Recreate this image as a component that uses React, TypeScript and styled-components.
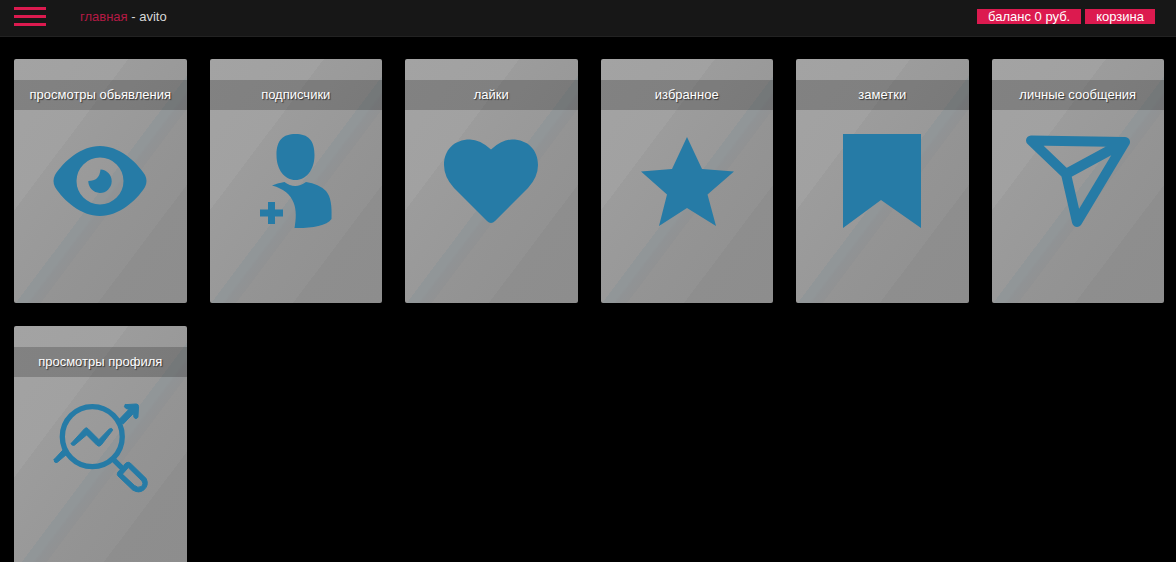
import React from "react";
import styled, { createGlobalStyle } from "styled-components";

const GlobalStyle = createGlobalStyle`
  * { box-sizing: border-box; }
  body {
    margin: 0;
    background: #000;
    color: #fff;
    font: 13px/16px "Liberation Sans", Arial, sans-serif;
  }
`;

const Header = styled.header`
  display: flex;
  align-items: flex-start;
  height: 37px;
  padding: 7px 21px 0 14px;
  background: #171717;
  border-bottom: 1px solid #222;
`;

const MenuButton = styled.button`
  display: flex;
  flex-direction: column;
  gap: 5px;
  width: 32px;
  margin: 0;
  padding: 0;
  border: 0;
  background: none;
  cursor: pointer;
`;

const MenuBar = styled.span`
  height: 3px;
  background: #dc1a4f;
`;

const Breadcrumbs = styled.nav`
  margin: 2px auto 0 34px;
  color: #d8d8d8;
`;

const HomeLink = styled.a`
  color: #b51a45;
  text-decoration: none;
`;

const Actions = styled.div`
  display: flex;
  gap: 4px;
  margin-top: 2px;
`;

const ActionLink = styled.a`
  padding: 0 11px;
  background: #dc1a4f;
  color: #fff;
  line-height: 15px;
  text-decoration: none;
`;

const Services = styled.main`
  display: grid;
  grid-template-columns: repeat(6, 1fr);
  gap: 23px;
  padding: 22px 12px 23px 14px;
`;

const Card = styled.a`
  display: flex;
  flex-direction: column;
  align-items: center;
  height: 244px;
  padding-top: 21px;
  border-radius: 2px;
  background: linear-gradient(
    127deg,
    #a3a3a3 0%,
    #a1a1a1 32%,
    #9c9c9c 32%,
    #999 52%,
    #919698 52%,
    #919698 55%,
    #909395 56%,
    #919293 59%,
    #949494 59%,
    #929292 75%,
    #8e8e8e 75%,
    #8d8d8d 100%
  );
  color: #fff;
  text-decoration: none;
`;

const CardTitle = styled.h2`
  width: 100%;
  margin: 0 0 24px;
  background: rgba(0, 0, 0, 0.2);
  font-size: 13px;
  font-weight: 400;
  line-height: 30px;
  text-align: center;
  white-space: nowrap;
  text-shadow: 1px 1px 1px #333;
`;

const Icon = styled.svg`
  width: 94px;
  height: 94px;
  overflow: visible;
  fill: #267ba6;
  stroke: #267ba6;
  stroke-width: 0;
  stroke-linecap: round;
  stroke-linejoin: round;
`;

const services = [
  {
    title: "просмотры обьявления",
    icon: (
      <path
        fillRule="evenodd"
        d="M47 12C66 12 83 27 92 41Q95 47 92 53C83 67 66 82 47 82S11 67 2 53Q-1 47 2 41C11 27 28 12 47 12ZM47 23.5A23.5 23.5 0 1 0 47 70.500A23.500 23.500 0 1 0 47 23.500ZM47.500 35.500A11.700 11.700 0 1 1 35.300 47Q46.500 47 47.500 35.500Z"
      />
    ),
  },
  {
    title: "подписчики",
    icon: (
      <path d="M46.500 0C59 0 65.500 6 65.500 21C65.500 36 57 46 46.500 46S27.500 36 27.500 21C27.500 6 34 0 46.500 0ZM23 51.500Q28 49 35.500 48Q46 56 57 48Q70 50 77 57C82 63 83 72 82.500 85C78 92 60 94.500 45.500 94C49 76 47 58 23 51.500ZM19 68H26V75.500H34V82.500H26V90H19V82.500H11V75.500H19Z" />
    ),
  },
  {
    title: "лайки",
    icon: (
      <path d="M47 15.500Q36 5.500 26 5.500C10 5.500 0 16 0 31Q0 43 10 54L43 87Q47 91 51 87L84 54Q94 43 94 31C94 16 84 5.500 68 5.500Q58 5.500 47 15.500Z" />
    ),
  },
  {
    title: "избранное",
    icon: <path d="M47 3L62 35L94 37.500L67.500 60.500L76 92L47 74L19 92L27 60.500L1 37.500L32 35Z" />,
  },
  {
    title: "заметки",
    icon: <path d="M8 0H86V94L46 66L8 94Z" />,
  },
  {
    title: "личные сообщения",
    icon: (
      <path d="M0 6.500L94 8L46 88L35 40ZM35 40L94 8" fill="none" strokeWidth="10" />
    ),
  },
  {
    title: "просмотры профиля",
    icon: (
      <g transform="translate(-5 -3) scale(0.333)" strokeWidth="3">
        <circle cx="133" cy="116" r="90" fill="none" strokeWidth="16" />
        <path d="M70 136L110 92Q115 87 120 92L153 125L184 93Q193 88 194 97L160 141Q153 148 147 142L116 111L79 142Q69 144 70 136Z" />
        <path d="M232 20L265 18Q272 18 272 26L270 58Q264 66 258 58L257 46L226 78L212 66L243 34L235 32Q225 26 232 20Z" />
        <path d="M19 184L46 155L60 166L28 193Q17 197 19 184Z" />
        <path d="M199 187L224 212" strokeWidth="16" />
        <path
          fillRule="evenodd"
          d="M209 224Q206 230 210 234L254 276Q273 288 288 276Q304 262 295 242L250 198Q243 190 236 194L228 201V207L216 216ZM224 228L241 209L280 247Q290 257 280 266Q270 272 260 263Z"
        />
      </g>
    ),
  },
];

export default function App() {
  return (
    <>
      <GlobalStyle />
      <Header>
        <MenuButton type="button" aria-label="меню">
          <MenuBar />
          <MenuBar />
          <MenuBar />
        </MenuButton>
        <Breadcrumbs>
          <HomeLink href="#">главная</HomeLink> - avito
        </Breadcrumbs>
        <Actions>
          <ActionLink href="#">баланс 0 руб.</ActionLink>
          <ActionLink href="#">корзина</ActionLink>
        </Actions>
      </Header>
      <Services>
        {services.map(({ title, icon }) => (
          <Card href="#" key={title}>
            <CardTitle>{title}</CardTitle>
            <Icon viewBox="0 0 94 94" aria-hidden="true">
              {icon}
            </Icon>
          </Card>
        ))}
      </Services>
    </>
  );
}
